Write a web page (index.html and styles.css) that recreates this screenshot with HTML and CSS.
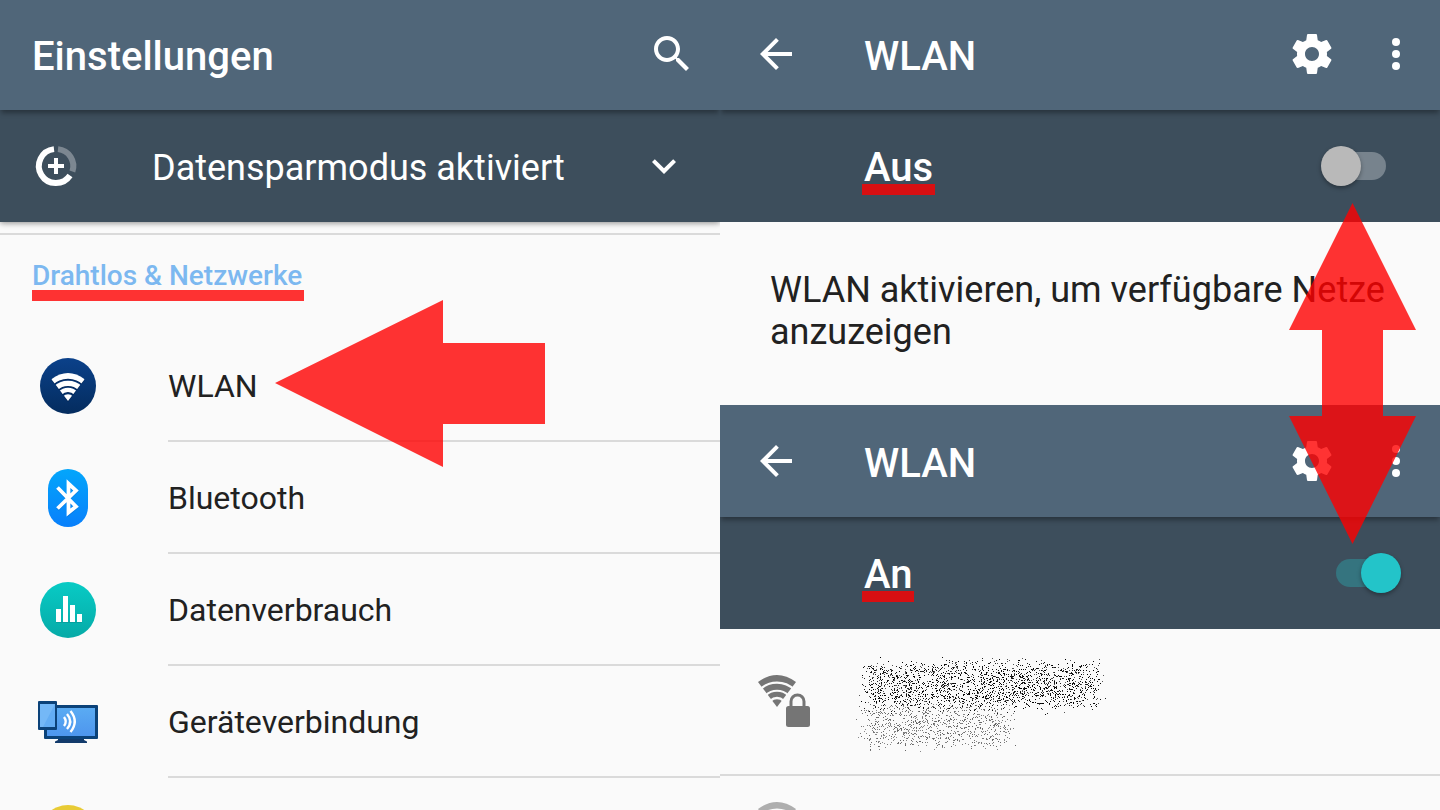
FILE: index.html
```html
<!DOCTYPE html>
<html lang="de">
<head>
<meta charset="utf-8">
<title>Einstellungen – WLAN</title>
<link rel="stylesheet" href="styles.css">
</head>
<body>
<svg class="defs" aria-hidden="true">
  <defs>
    <linearGradient id="navy" x1="0" y1="0" x2="0" y2="1"><stop offset="0" stop-color="#0b418a"/><stop offset="1" stop-color="#042c5e"/></linearGradient>
    <linearGradient id="azure" x1="0" y1="0" x2="0" y2="1"><stop offset="0" stop-color="#03a6fb"/><stop offset="1" stop-color="#087ffb"/></linearGradient>
    <linearGradient id="teal" x1="0" y1="0" x2="0" y2="1"><stop offset="0" stop-color="#08cbc5"/><stop offset="1" stop-color="#06aaa7"/></linearGradient>
    <linearGradient id="screen" x1="0" y1="0" x2="0" y2="1"><stop offset="0" stop-color="#5aabf3"/><stop offset="1" stop-color="#4e96ee"/></linearGradient>
    <symbol id="back" viewBox="0 0 24 24"><path d="M20 11H7.83l5.59-5.59L12 4l-8 8 8 8 1.41-1.41L7.83 13H20v-2z"/></symbol>
    <symbol id="gear" viewBox="0 0 24 24"><path d="M19.43 12.98c.04-.32.07-.64.07-.98s-.03-.66-.07-.98l2.11-1.65c.19-.15.24-.42.12-.64l-2-3.46c-.12-.22-.39-.3-.61-.22l-2.49 1c-.52-.4-1.08-.73-1.69-.98l-.38-2.65C14.46 2.18 14.25 2 14 2h-4c-.25 0-.46.18-.49.42l-.38 2.65c-.61.25-1.17.59-1.69.98l-2.49-1c-.23-.09-.49 0-.61.22l-2 3.46c-.13.22-.07.49.12.64l2.11 1.65c-.04.32-.07.65-.07.98s.03.66.07.98l-2.11 1.65c-.19.15-.24.42-.12.64l2 3.46c.12.22.39.3.61.22l2.49-1c.52.4 1.08.73 1.69.98l.38 2.65c.03.24.24.42.49.42h4c.25 0 .46-.18.49-.42l.38-2.65c.61-.25 1.17-.59 1.69-.98l2.49 1c.23.09.49 0 .61-.22l2-3.46c.12-.22.07-.49-.12-.64l-2.11-1.65zM12 15.5c-1.93 0-3.5-1.57-3.5-3.5s1.57-3.5 3.5-3.5 3.5 1.57 3.5 3.5-1.57 3.5-3.5 3.5z"/></symbol>
    <symbol id="dots" viewBox="0 0 24 24"><circle cx="12" cy="6" r="2"/><circle cx="12" cy="12" r="2"/><circle cx="12" cy="18" r="2"/></symbol>
    <symbol id="fan" viewBox="0 0 38 32">
      <clipPath id="fanclip"><path d="M0 7Q19-7 38 7L19 32z"/></clipPath>
      <g clip-path="url(#fanclip)"><circle cx="19" cy="32" r="7.8"/><g fill="none" stroke="currentColor"><circle cx="19" cy="32" r="12.7" stroke-width="5"/><circle cx="19" cy="32" r="20.2" stroke-width="6"/><circle cx="19" cy="32" r="29" stroke-width="7"/></g></g>
    </symbol>
  </defs>
</svg>
<main class="screens">
  <section class="panel">
    <header class="appbar appbar-top">
      <h1 class="title title-wide">Einstellungen</h1>
      <button class="iconbtn search" aria-label="Suchen"><svg viewBox="0 0 24 24"><path d="M15.5 14h-.79l-.28-.27C15.41 12.59 16 11.11 16 9.5 16 5.91 13.09 3 9.5 3S3 5.91 3 9.5 5.91 16 9.5 16c1.61 0 3.09-.59 4.23-1.57l.27.28v.79l5 4.99L20.49 19l-4.99-5zm-6 0C7.01 14 5 11.99 5 9.5S7.01 5 9.5 5 14 7.01 14 9.5 11.99 14 9.5 14z"/></svg></button>
    </header>
    <button class="saver">
      <svg class="icon" viewBox="0 0 48 48" aria-hidden="true">
        <g fill="none" stroke-width="6"><path stroke="#fff" d="M22 7.120A17 17 0 1 0 38 33.500"/><path stroke="#7c8791" d="M26 7.120A17 17 0 0 1 40.400 29.500"/></g>
        <path fill="#fff" d="M22 16h4v6h6v4h-6v6h-4v-6h-6v-4h6z"/>
      </svg>
      <span class="saver-text">Datensparmodus aktiviert</span>
      <svg class="icon" viewBox="0 0 24 24" aria-hidden="true"><path d="M16.59 8.59L12 13.17 7.41 8.59 6 10l6 6 6-6z"/></svg>
    </button>
    <div class="category">
      <h2 class="category-title"><span class="marked">Drahtlos &amp; Netzwerke</span></h2>
    </div>
    <ul class="list">
      <li><a class="row" href="#wlan">
        <svg class="row-icon" viewBox="0 0 64 64" aria-hidden="true"><circle cx="32" cy="32" r="28" fill="url(#navy)"/><svg x="15" y="20" width="34" height="28" color="#021f4b" fill="#021f4b" opacity=".6"><use href="#fan"/></svg><svg x="15" y="19" width="34" height="28" color="#fff" fill="#fff"><use href="#fan"/></svg></svg>
        <span class="row-text">WLAN</span></a></li>
      <li><a class="row" href="#bluetooth">
        <svg class="row-icon" viewBox="0 0 64 64" aria-hidden="true"><rect x="12" y="3" width="40" height="58" rx="20" fill="url(#azure)"/><path d="M21.500 21.500L40 40.500L33 46.500V18.500L40 24.500L21.500 42.500" transform="translate(0 1)" fill="none" stroke="#0668ce" stroke-opacity=".5" stroke-width="3.400"/><path d="M21.500 21.500L40 40.500L32.500 46.500V17.500L40 24.500L21.500 42.500" fill="none" stroke="#fff" stroke-width="3.800"/></svg>
        <span class="row-text">Bluetooth</span></a></li>
      <li><a class="row" href="#datenverbrauch">
        <svg class="row-icon" viewBox="0 0 64 64" aria-hidden="true"><circle cx="32" cy="32" r="28" fill="url(#teal)"/><path fill="#068f8e" opacity=".5" d="M20 44h26v1H20z"/><path fill="#fff" d="M20 31h5v13h-5zM27 18h5v26h-5zM34 27h5v17h-5zM41 36h5v8h-5z"/></svg>
        <span class="row-text">Datenverbrauch</span></a></li>
      <li><a class="row" href="#geraeteverbindung">
        <svg class="row-icon" viewBox="0 0 64 64" aria-hidden="true"><g transform="translate(0 4)"><path fill="#123a6b" d="M22 45h26v1l3 1.500v1.500H19v-1.500l3-1.500z"/><rect x="8" y="11" width="54" height="34" rx="1" fill="#0b4279"/><rect x="11" y="14" width="48" height="28" fill="url(#screen)"/><rect x="2" y="7" width="19" height="29" rx="1" fill="#0b4279"/><rect x="4" y="10" width="15" height="23" fill="#63adf4"/><path fill="#80bff8" d="M4 10h15L7 33H4z" opacity=".6"/><path d="M28 23q3.500 4.500 0 9M31 20q6.500 7.500 0 15M34.500 17q8.500 10.500 0 21" fill="none" stroke="#fff" stroke-width="2.400"/></g></svg>
        <span class="row-text">Geräteverbindung</span></a></li>
      <li><a class="row" href="#mehr" aria-label="Weitere Einstellung">
        <svg class="row-icon" viewBox="0 0 64 64" aria-hidden="true"><circle cx="32" cy="32" r="29" fill="#e8cb35"/></svg></a></li>
    </ul>
    <svg class="arrow arrow-left" viewBox="0 0 270 167" aria-hidden="true"><path d="M0 83L168 0V43H270V124H168V167z"/></svg>
  </section>

  <section class="panel">
    <header class="appbar appbar-top appbar-sub">
      <button class="iconbtn" aria-label="Zurück"><svg><use href="#back"/></svg></button>
      <h1 class="title">WLAN</h1>
      <button class="iconbtn" aria-label="WLAN konfigurieren"><svg><use href="#gear"/></svg></button>
      <button class="iconbtn more" aria-label="Weitere Optionen"><svg><use href="#dots"/></svg></button>
    </header>
    <div class="switchbar">
      <label class="marked" for="wlan-off">Aus</label>
      <input class="switch" id="wlan-off" type="checkbox" role="switch">
    </div>
    <p class="message">WLAN aktivieren, um verfügbare Netze anzuzeigen</p>
    <header class="appbar appbar-sub">
      <button class="iconbtn" aria-label="Zurück"><svg><use href="#back"/></svg></button>
      <h1 class="title">WLAN</h1>
      <button class="iconbtn" aria-label="WLAN konfigurieren"><svg><use href="#gear"/></svg></button>
      <button class="iconbtn more" aria-label="Weitere Optionen"><svg><use href="#dots"/></svg></button>
    </header>
    <div class="switchbar">
      <label class="marked" for="wlan-on">An</label>
      <input class="switch" id="wlan-on" type="checkbox" role="switch" checked>
    </div>
    <ul class="list">
      <li class="network">
        <svg class="signal" viewBox="0 0 54 54" aria-hidden="true"><svg width="38" height="32" color="#757575" fill="#757575"><use href="#fan"/></svg><path d="M33 32V26.500a6.500 6.500 0 0 1 13 0V32" fill="none" stroke="#fafafa" stroke-width="7"/><rect x="26" y="29" width="28" height="25" rx="4" fill="#fafafa"/><path d="M33 32V26.500a6.500 6.500 0 0 1 13 0V32" fill="none" stroke="#757575" stroke-width="3"/><rect x="28" y="31" width="24" height="21" rx="2.500" fill="#757575"/></svg>
        <canvas class="speckle" width="256" height="100"></canvas>
      </li>
      <li class="network network-next">
        <svg class="signal" viewBox="0 0 54 54" aria-hidden="true"><svg width="38" height="32" color="#aeaeae" fill="#aeaeae"><use href="#fan"/></svg></svg>
      </li>
    </ul>
    <svg class="arrow arrow-updown" viewBox="0 0 127 341" aria-hidden="true"><path d="M63.500 0L127 127H94V213H127L63.500 341L0 213H33V127H0z"/></svg>
  </section>
</main>
<script src="speckle.js"></script>
</body>
</html>
```

FILE: styles.css
```css
* { box-sizing: border-box; }

body {
  margin: 0;
  height: 100vh;
  overflow: hidden;
  background: #fafafa;
  color: #212121;
  font-family: Roboto, "Noto Sans", sans-serif;
}

h1, h2, p, ul { margin: 0; padding: 0; }
ul { list-style: none; }
button { border: 0; margin: 0; padding: 0; background: none; color: inherit; font: inherit; }

.defs { position: absolute; width: 0; height: 0; }

.screens { display: grid; grid-template-columns: 1fr 1fr; height: 100%; }
.panel { position: relative; min-width: 0; overflow: hidden; }

.appbar {
  position: relative;
  z-index: 1;
  display: flex;
  align-items: flex-start;
  padding: 32px 20px 26px 32px;
  background: #506679;
  color: #fff;
  box-shadow: 0 4px 5px -1px rgba(0, 0, 0, 0.35);
}
.appbar-top { padding-top: 30px; }
.title { flex: 1; padding-left: 64px; font-size: 40px; line-height: 54px; font-weight: 500; }
.title-wide { padding-left: 0; }
.iconbtn { width: 48px; height: 48px; }
.iconbtn svg { display: block; width: 48px; height: 48px; fill: #fff; }
.search { margin-right: 4px; }
.more { margin-left: 36px; }

.saver {
  position: relative;
  display: flex;
  align-items: center;
  width: 100%;
  padding: 32px;
  background: #3d4e5c;
  color: #fff;
  text-align: left;
  box-shadow: 0 1px 6px rgba(0, 0, 0, 0.45);
}
.icon { width: 48px; height: 48px; fill: #fff; }
.saver-text { flex: 1; padding: 4px 0 0 72px; font-size: 36px; line-height: 44px; }

.category { margin-top: 11px; padding: 24px 32px 37px; border-top: 2px solid #dadada; }
.category-title { color: #7cb8f0; font-size: 28px; line-height: 34px; font-weight: 500; }

.marked { position: relative; display: inline-block; }
.marked::after {
  content: "";
  position: absolute;
  left: 0;
  right: -2px;
  bottom: -8px;
  height: 11px;
  background: rgba(255, 0, 0, 0.8);
}

.row { display: flex; align-items: center; min-height: 112px; padding-left: 36px; color: inherit; text-decoration: none; }
.row-icon { width: 64px; height: 64px; }
.row-text {
  flex: 1;
  margin-left: 68px;
  padding: 36px 0 34px;
  border-bottom: 2px solid #dadada;
  font-size: 32px;
  line-height: 40px;
}

.switchbar {
  display: flex;
  align-items: center;
  justify-content: space-between;
  padding: 32px 54px 32px 144px;
  background: #3d4e5c;
  color: #fff;
  font-size: 40px;
  line-height: 48px;
  font-weight: 500;
}
.switchbar .marked { padding-top: 2px; margin-bottom: -2px; }
.switchbar .marked::after { left: -2px; right: -2px; bottom: -3px; }

.switch {
  appearance: none;
  position: relative;
  width: 50px;
  height: 28px;
  margin: 0;
  border-radius: 14px;
  background: #77838d;
}
.switch::before {
  content: "";
  position: absolute;
  top: -6px;
  left: -15px;
  width: 40px;
  height: 40px;
  border-radius: 50%;
  background: #b9b9b9;
  box-shadow: 0 2px 4px rgba(0, 0, 0, 0.35);
}
.switch:checked { background: #35747f; }
.switch:checked::before { left: 25px; background: #23c4c9; }

.message { padding: 47px 50px 52px; font-size: 36px; line-height: 42px; }

.network {
  display: flex;
  align-items: flex-start;
  padding: 26px 38px 19px;
  border-bottom: 2px solid #dadada;
}
.signal { width: 54px; height: 54px; margin-top: 20px; }
.network-next .signal { margin-top: 0; }
.speckle { display: block; margin-left: 42px; }

.arrow { position: absolute; z-index: 2; fill: rgba(255, 0, 0, 0.8); pointer-events: none; }
.arrow-left { left: 275px; top: 300px; width: 270px; }
.arrow-updown { right: 24px; top: 203px; width: 127px; }
```

FILE: speckle.js
```js
// Scatters grey and black dots over the network name and its status line.
const canvas = document.querySelector(".speckle");
const ctx = canvas.getContext("2d");
let seed = 4711;

function random() {
  seed = (seed * 1664525 + 1013904223) % 4294967296;
  return seed / 4294967296;
}

function spread(size, edge) {
  return edge + random() * (size - 2 * edge) + (random() + random() - 1) * edge;
}

function scatter(count, left, top, width, height, shades) {
  for (let i = 0; i < count; i++) {
    ctx.fillStyle = shades[Math.floor(random() * shades.length)];
    const x = Math.floor(left + spread(width, 14));
    const y = Math.floor(top + spread(height, 10));
    ctx.fillRect(x, y, 1, 1);
  }
}

scatter(950, 0, 42, 168, 57, ["#666", "#777", "#888"]);
scatter(2150, 1, 0, 255, 61, ["#000", "#111", "#222", "#555"]);
```
